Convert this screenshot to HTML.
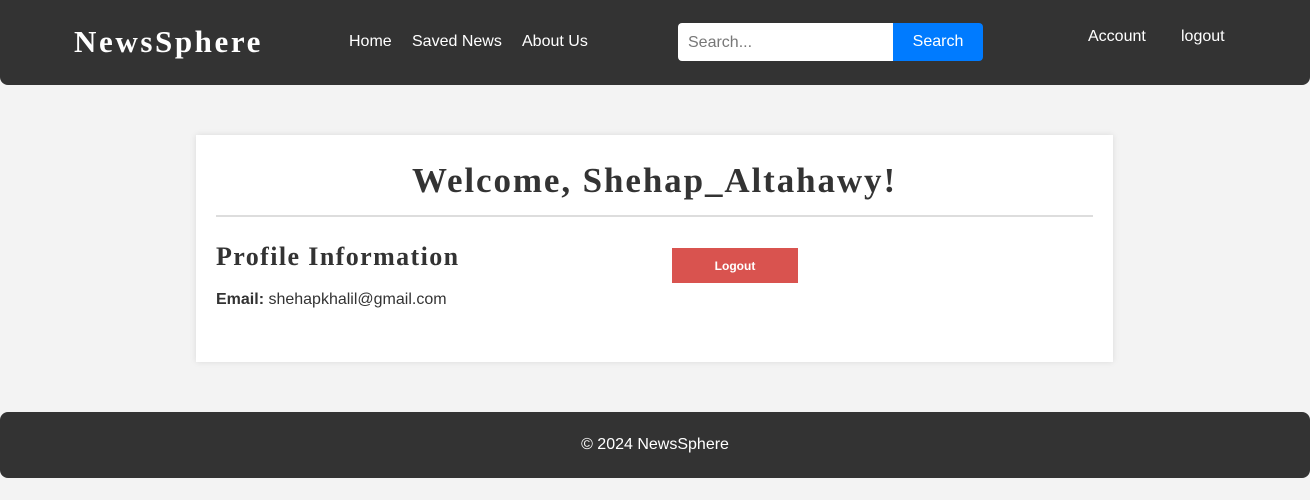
<!DOCTYPE html>
<html><head><style>
*{margin:0;padding:0;box-sizing:border-box}
body{width:1310px;height:500px;background:#f3f3f3;font-family:"Liberation Sans",Arial,sans-serif;position:relative;overflow:hidden}
.hdr{position:absolute;left:0;top:0;width:1310px;height:85px;background:#333;border-radius:0 0 8px 8px;color:#fff}
.logo{position:absolute;left:74px;top:24px;font-family:"Liberation Serif",serif;font-weight:bold;font-size:31px;letter-spacing:2.6px}
.nav{position:absolute;top:33px;font-size:16px}
.search{position:absolute;left:678px;top:23px;width:215px;height:38px;background:#fff;border-radius:4px 0 0 4px;color:#777;font-size:16px;padding:11px 10px}
.sbtn{position:absolute;left:893px;top:23px;width:90px;height:38px;background:#007bff;border-radius:0 4px 4px 0;color:#fff;font-size:16px;text-align:center;line-height:38px}
.card{position:absolute;left:196px;top:135px;width:917px;height:227px;background:#fff;box-shadow:0 0 6px rgba(0,0,0,.1)}
h1{position:absolute;left:0;width:917px;top:26px;text-align:center;font-family:"Liberation Serif",serif;font-size:35px;color:#333;letter-spacing:1.9px}
.hr{position:absolute;left:20px;top:80px;width:877px;height:2px;background:#ddd}
h2{position:absolute;left:20px;top:107px;font-family:"Liberation Serif",serif;font-size:26px;color:#333;letter-spacing:1.4px}
.em{position:absolute;left:20px;top:156px;font-size:16px;color:#333}
.lo{position:absolute;left:476px;top:113px;width:126px;height:35px;background:#d9534f;color:#fff;font-size:12px;font-weight:bold;text-align:center;line-height:36px}
.ftr{position:absolute;left:0;top:412px;width:1310px;height:66px;background:#333;border-radius:8px;color:#fff;text-align:center;line-height:66px;font-size:16px}
</style></head><body>
<div class="hdr">
<div class="logo">NewsSphere</div>
<div class="nav" style="left:349px">Home</div>
<div class="nav" style="left:412px">Saved News</div>
<div class="nav" style="left:522px">About Us</div>
<div class="search">Search...</div>
<div class="sbtn">Search</div>
<div class="nav" style="left:1088px;top:28px">Account</div>
<div class="nav" style="left:1181px;top:28px">logout</div>
</div>
<div class="card">
<h1>Welcome, Shehap_Altahawy!</h1>
<div class="hr"></div>
<h2>Profile Information</h2>
<div class="em"><b>Email:</b> shehapkhalil@gmail.com</div>
<div class="lo">Logout</div>
</div>
<div class="ftr">© 2024 NewsSphere</div>
</body></html>
